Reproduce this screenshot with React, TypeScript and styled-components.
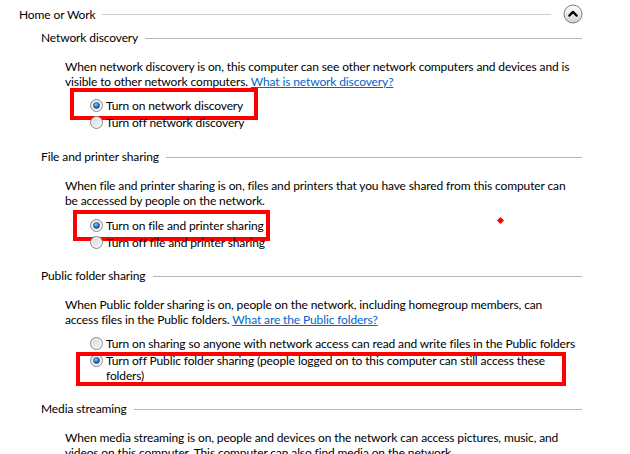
import React from "react";
import styled, { createGlobalStyle } from "styled-components";

const GlobalStyle = createGlobalStyle`
  html, body {
    margin: 0;
    padding: 0;
    background: #ffffff;
  }
  body {
    font-family: "Segoe UI", Lato, "Liberation Sans", sans-serif;
    font-size: 12px;
    letter-spacing: -0.12px;
    color: #000000;
  }
`;

const Page = styled.div`
  position: relative;
  width: 630px;
  height: 454px;
  overflow: hidden;
  padding: 4px 0 0 19px;
  box-sizing: border-box;
`;

const Group = styled.div`
  width: 564px;
`;

const GroupHeader = styled.div`
  display: flex;
  align-items: center;
  height: 20px;
  gap: 7px;
`;

const HeaderLabel = styled.span`
  white-space: nowrap;
  line-height: 15px;
`;

const Rule = styled.div<{ $tone: string }>`
  flex: 1;
  height: 1px;
  background: ${(p) => p.$tone};
  margin-top: 1px;
`;

const CollapseButton = styled.button`
  width: 20px;
  height: 20px;
  padding: 0;
  border: none;
  background: none;
  margin-left: 5px;
  display: flex;
  align-items: center;
  justify-content: center;
`;

const Section = styled.section<{ $gapTop: number }>`
  margin-top: ${(p) => p.$gapTop}px;
  padding-left: 22px;
  margin-right: 1px;
`;

const SectionHeader = styled.div`
  display: flex;
  align-items: center;
  gap: 7px;
  height: 15px;
`;

const Body = styled.div`
  padding-left: 24px;
  margin-top: 14px;
`;

const Para = styled.p`
  margin: 0;
  line-height: 15px;
  white-space: nowrap;
`;

const Link = styled.a`
  color: #0066cc;
  text-decoration: underline;
  cursor: pointer;
`;

const RadioList = styled.div<{ $gapTop: number }>`
  margin-top: ${(p) => p.$gapTop}px;
  padding-left: 25px;
  display: flex;
  flex-direction: column;
`;

const RadioRow = styled.label`
  position: relative;
  display: flex;
  align-items: flex-start;
  gap: 3px;
  padding: 1px 0;
  line-height: 15px;
  white-space: nowrap;
`;

const RadioMark = styled.span`
  display: flex;
  width: 13px;
  height: 13px;
  margin-top: 1px;
  flex: none;
`;

const RedBox = styled.div`
  position: absolute;
  border: 4px solid #ff0000;
  box-sizing: border-box;
  pointer-events: none;
`;

const RedDot = styled.div`
  position: absolute;
  left: 498px;
  top: 218px;
  width: 5px;
  height: 5px;
  background: #ff0000;
  transform: rotate(45deg);
`;

const Radio: React.FC<{ checked?: boolean }> = ({ checked }) => (
  <RadioMark>
    <svg width="13" height="13" viewBox="0 0 13 13">
      <defs>
        <linearGradient id="rg" x1="0" y1="0" x2="1" y2="1">
          <stop offset="0" stopColor="#d2d2d2" />
          <stop offset="1" stopColor="#fbfbfb" />
        </linearGradient>
        <radialGradient id="dot" cx="0.4" cy="0.35" r="0.7">
          <stop offset="0" stopColor="#9ad2ff" />
          <stop offset="0.5" stopColor="#2b7bd3" />
          <stop offset="1" stopColor="#0b3f86" />
        </radialGradient>
      </defs>
      <circle cx="6.5" cy="6.5" r="6" fill="url(#rg)" stroke="#8a8b8c" strokeWidth="1" />
      <circle cx="6.5" cy="6.5" r="4.5" fill="none" stroke="#f4f4f4" strokeWidth="1" />
      {checked && <circle cx="6.5" cy="6.5" r="3" fill="url(#dot)" stroke="#27466d" strokeWidth="0.6" />}
    </svg>
  </RadioMark>
);

const ChevronUpButton = () => (
  <CollapseButton aria-label="Collapse">
    <svg width="20" height="20" viewBox="0 0 20 20">
      <defs>
        <linearGradient id="bg" x1="0" y1="0" x2="0" y2="1">
          <stop offset="0" stopColor="#fdfdfd" />
          <stop offset="0.55" stopColor="#e9e9e9" />
          <stop offset="1" stopColor="#cfcfcf" />
        </linearGradient>
      </defs>
      <circle cx="10" cy="10" r="9" fill="url(#bg)" stroke="#7d7d7d" strokeWidth="1" />
      <path d="M6.3 11.6 L10 7.9 L13.7 11.6" fill="none" stroke="#000" strokeWidth="2.2" strokeLinecap="round" strokeLinejoin="round" />
    </svg>
  </CollapseButton>
);

type Box = { left: number; top: number; width: number; height: number };

const Option: React.FC<{ checked?: boolean; box?: Box; children: React.ReactNode }> = ({
  checked,
  box,
  children,
}) => (
  <RadioRow>
    <Radio checked={checked} />
    <span>{children}</span>
    {box && (
      <RedBox style={{ left: box.left, top: box.top, width: box.width, height: box.height }} />
    )}
  </RadioRow>
);

const SectionTitle: React.FC<{ title: string }> = ({ title }) => (
  <SectionHeader>
    <HeaderLabel>{title}</HeaderLabel>
    <Rule $tone="#b5b5b5" />
  </SectionHeader>
);

export default function App() {
  return (
    <>
      <GlobalStyle />
      <Page>
        <Group>
          <GroupHeader>
            <HeaderLabel>Home or Work</HeaderLabel>
            <Rule $tone="#cdcdcd" />
            <ChevronUpButton />
          </GroupHeader>

          <Section $gapTop={6}>
            <SectionTitle title="Network discovery" />
            <Body>
              <Para>
                When network discovery is on, this computer can see other network computers and devices and is
                <br />
                visible to other network computers. <Link>What is network discovery?</Link>
              </Para>
              <RadioList $gapTop={8}>
                <Option checked box={{ left: -20, top: -9, width: 188, height: 32 }}>
                  Turn on network discovery
                </Option>
                <Option>Turn off network discovery</Option>
              </RadioList>
            </Body>
          </Section>

          <Section $gapTop={18}>
            <SectionTitle title="File and printer sharing" />
            <Body>
              <Para>
                When file and printer sharing is on, files and printers that you have shared from this computer can
                <br />
                be accessed by people on the network.
              </Para>
              <RadioList $gapTop={9}>
                <Option checked box={{ left: -17, top: -7, width: 197, height: 31 }}>
                  Turn on file and printer sharing
                </Option>
                <Option>Turn off file and printer sharing</Option>
              </RadioList>
            </Body>
          </Section>

          <Section $gapTop={17}>
            <SectionTitle title="Public folder sharing" />
            <Body>
              <Para>
                When Public folder sharing is on, people on the network, including homegroup members, can
                <br />
                access files in the Public folders. <Link>What are the Public folders?</Link>
              </Para>
              <RadioList $gapTop={8}>
                <Option>
                  Turn on sharing so anyone with network access can read and write files in the Public folders
                </Option>
                <Option checked box={{ left: -14, top: 0, width: 490, height: 34 }}>
                  Turn off Public folder sharing (people logged on to this computer can still access these
                  <br />
                  folders)
                </Option>
              </RadioList>
            </Body>
          </Section>

          <Section $gapTop={17}>
            <SectionTitle title="Media streaming" />
            <Body>
              <Para>
                When media streaming is on, people and devices on the network can access pictures, music, and
                <br />
                videos on this computer. This computer can also find media on the network.
              </Para>
            </Body>
          </Section>
        </Group>
        <RedDot />
      </Page>
    </>
  );
}
